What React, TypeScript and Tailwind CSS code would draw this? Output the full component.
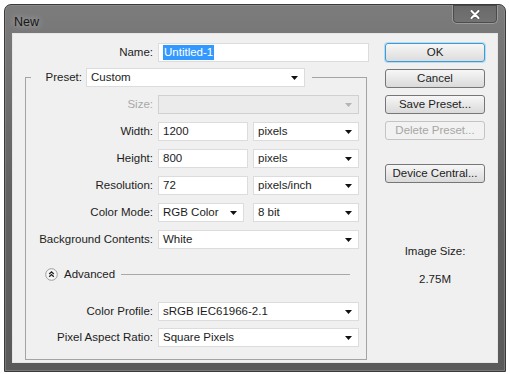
import type { ReactNode } from 'react';

type FieldProps = {
  value: string;
  className?: string;
  disabled?: boolean;
};

function Caret({ disabled = false }: { disabled?: boolean }) {
  return (
    <svg width="7" height="4" viewBox="0 0 7 4" aria-hidden="true">
      <polygon points="0,0 7,0 3.5,4" fill={disabled ? '#b4b4b4' : '#111111'} />
    </svg>
  );
}

function Select({ value, className = '', disabled = false }: FieldProps) {
  return (
    <div
      className={`flex h-[19px] items-center justify-between border pl-[4px] pr-[6px] ${
        disabled ? 'border-[#d0d0d0] bg-[#ebebeb]' : 'border-[#dcdcdc] bg-white'
      } ${className}`}
    >
      <span>{value}</span>
      <Caret disabled={disabled} />
    </div>
  );
}

function TextInput({ value, className = '' }: FieldProps) {
  return (
    <div className={`flex h-[19px] items-center border border-[#dcdcdc] bg-white pl-[4px] ${className}`}>
      {value}
    </div>
  );
}

function Row({ label, children, muted = false }: { label: string; children: ReactNode; muted?: boolean }) {
  return (
    <div className="flex h-[19px] items-center">
      <span className={`w-[127px] text-right ${muted ? 'text-[#a8a8a8]' : ''}`}>{label}</span>
      <div className="ml-[5px] flex gap-[5px]">{children}</div>
    </div>
  );
}

function DialogButton({ label, primary = false, disabled = false }: { label: string; primary?: boolean; disabled?: boolean }) {
  const tone = disabled
    ? 'border-[#c4c4c4] bg-[#f2f2f2] text-[#a6a6a6]'
    : primary
      ? 'border-[#3b9cd9] bg-gradient-to-b from-[#f7f7f7] to-[#dcdcdc] shadow-[0_0_0_1px_rgba(120,190,235,0.45)]'
      : 'border-[#767676] bg-gradient-to-b from-[#f7f7f7] to-[#dadada]';

  return (
    <button
      type="button"
      className={`flex h-[19px] w-[100px] items-center justify-center rounded-[3px] border ${tone}`}
    >
      {label}
    </button>
  );
}

function AdvancedIcon() {
  return (
    <svg width="13" height="13" viewBox="0 0 13 13" aria-hidden="true">
      <circle cx="6.5" cy="6.5" r="5.8" fill="#f7f7f7" stroke="#9c9c9c" strokeWidth="1" />
      <path d="M4.2 6 L6.5 3.8 L8.8 6 M4.2 8.8 L6.5 6.6 L8.8 8.8" fill="none" stroke="#222" strokeWidth="1.3" />
    </svg>
  );
}

export default function App() {
  return (
    <div className="h-[374px] w-[510px] overflow-hidden bg-white font-['Liberation_Sans',Arial,sans-serif] text-[11.5px] text-[#1c1c1c]">
      <div className="ml-[4px] mt-[4px] flex h-[368px] w-[502px] flex-col rounded-t-[7px] border border-[#3a3a3a] bg-gradient-to-b from-[#7c7c7c] via-[#626262] to-[#5a5a5a] px-[7px] pb-[8px] shadow-[inset_0_0_0_1px_rgba(150,150,150,0.5)]">
        {/* title bar */}
        <div className="flex h-[28px] items-start justify-between">
          <span className="mt-[8px] ml-[2px] text-[12.5px] text-[#161616] [text-shadow:0_0_6px_rgba(255,255,255,0.55)]">
            New
          </span>
          <button
            type="button"
            aria-label="Close"
            className="flex h-[19px] w-[46px] items-center justify-center rounded-b-[5px] border border-t-0 border-[#9a9a9a] bg-gradient-to-b from-[#6a6a6a] to-[#737373] shadow-[inset_0_0_0_1px_rgba(40,40,40,0.5)]"
          >
            <svg width="10" height="9" viewBox="0 0 10 9" aria-hidden="true">
              <path d="M1.5 1 L8.5 8 M8.5 1 L1.5 8" stroke="#3a3a3a" strokeWidth="3.4" strokeLinecap="round" />
              <path d="M1.5 1 L8.5 8 M8.5 1 L1.5 8" stroke="#ffffff" strokeWidth="2.2" strokeLinecap="round" />
            </svg>
          </button>
        </div>

        {/* client area */}
        <div className="flex flex-1 border border-[#e6e6e6] bg-[#f0f0f0] pt-[9px]">
          <div className="w-[357px]">
            <div className="flex h-[19px] items-center">
              <span className="w-[140px] text-right">Name:</span>
              <div className="ml-[5px] flex h-[19px] w-[211px] items-center border border-[#dcdcdc] bg-white pl-[4px]">
                <span className="bg-[#3399ff] px-px leading-[15px] text-white">Untitled-1</span>
              </div>
            </div>

            <div className="ml-[12px] mt-[6px] w-[342px]">
              <div className="flex h-[19px] items-center">
                <div className="h-[10px] w-[6px] self-end border-l border-t border-[#a4a4a4]" />
                <span className="w-[51px] text-right">Preset:</span>
                <Select value="Custom" className="ml-[4px] w-[219px]" />
                <div className="ml-[7px] h-[10px] flex-1 self-end border-r border-t border-[#a4a4a4]" />
              </div>

              <div className="flex flex-col border-x border-b border-[#a4a4a4] pb-[12px] pt-[8px]">
                <div className="flex flex-col gap-[8px]">
                  <Row label="Size:" muted>
                    <Select value="" disabled className="w-[201px]" />
                  </Row>
                  <Row label="Width:">
                    <TextInput value="1200" className="w-[90px]" />
                    <Select value="pixels" className="w-[106px]" />
                  </Row>
                  <Row label="Height:">
                    <TextInput value="800" className="w-[90px]" />
                    <Select value="pixels" className="w-[106px]" />
                  </Row>
                  <Row label="Resolution:">
                    <TextInput value="72" className="w-[90px]" />
                    <Select value="pixels/inch" className="w-[106px]" />
                  </Row>
                  <Row label="Color Mode:">
                    <Select value="RGB Color" className="w-[86px]" />
                    <Select value="8 bit" className="ml-[4px] w-[106px]" />
                  </Row>
                  <Row label="Background Contents:">
                    <Select value="White" className="w-[201px]" />
                  </Row>
                </div>

                <div className="mt-[19px] flex h-[13px] items-center pl-[19px]">
                  <AdvancedIcon />
                  <span className="ml-[6px]">Advanced</span>
                  <div className="ml-[6px] h-px w-[229px] bg-[#a8a8a8]" />
                </div>

                <div className="mt-[21px] flex flex-col gap-[7px]">
                  <Row label="Color Profile:">
                    <Select value="sRGB IEC61966-2.1" className="w-[201px]" />
                  </Row>
                  <Row label="Pixel Aspect Ratio:">
                    <Select value="Square Pixels" className="w-[201px]" />
                  </Row>
                </div>
              </div>
            </div>
          </div>

          <div className="ml-[15px] flex w-[100px] flex-col items-center">
            <div className="flex flex-col gap-[7px]">
              <DialogButton label="OK" primary />
              <DialogButton label="Cancel" />
              <DialogButton label="Save Preset..." />
              <DialogButton label="Delete Preset..." disabled />
            </div>
            <div className="mt-[24px]">
              <DialogButton label="Device Central..." />
            </div>
            <span className="mt-[60px]">Image Size:</span>
            <span className="mt-[11px]">2.75M</span>
          </div>
        </div>
      </div>
    </div>
  );
}
